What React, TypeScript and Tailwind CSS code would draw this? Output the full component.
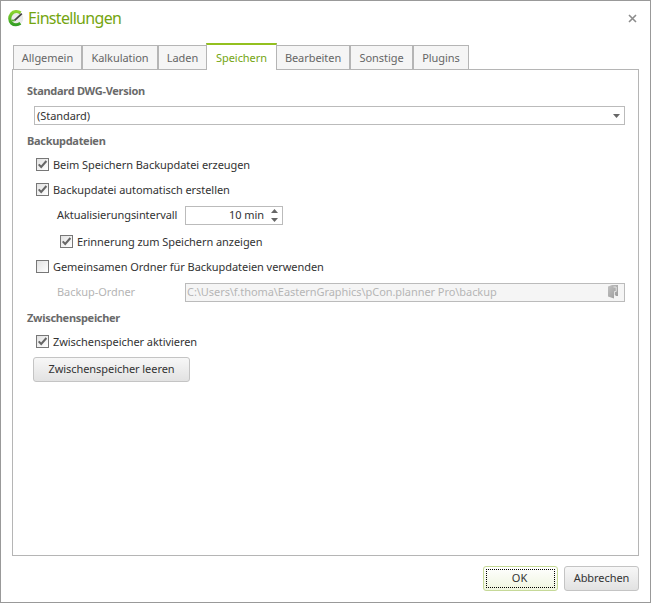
import type { ReactNode } from "react";

const tabs = [
  { label: "Allgemein", className: "w-[69px] border-x" },
  { label: "Kalkulation", className: "w-[76px] border-x" },
  { label: "Laden", className: "w-[48px] border-l" },
  { label: "Speichern", className: "w-[71px] border-x", active: true },
  { label: "Bearbeiten", className: "w-[73px] border-r" },
  { label: "Sonstige", className: "w-[63px] border-x" },
  { label: "Plugins", className: "w-[56px] border-x" },
];

function Logo() {
  return (
    <svg width="16" height="17" viewBox="0 0 16 17" fill="none">
      <defs>
        <linearGradient id="ring" x1="0" y1="0" x2="0" y2="1">
          <stop offset="0" stopColor="#8ad32f" />
          <stop offset="1" stopColor="#35a025" />
        </linearGradient>
      </defs>
      <circle cx="8.5" cy="8.5" r="6.8" fill="#ebebeb" />
      <path
        d="M12.6 2.9C9.6 .9 5.6 1.3 3.4 3.9 1.1 6.8 1.3 11 3.7 13.2 6.1 15.4 9.8 15.1 12.4 13.3"
        stroke="url(#ring)"
        strokeWidth="3.2"
      />
      <path d="M4 10.2 6.6 10.6" stroke="#55b52c" strokeWidth="1.6" />
      <path d="M6.6 10.4 13.8 3.6" stroke="#444" strokeWidth="1.8" />
    </svg>
  );
}

function Heading({ children }: { children: ReactNode }) {
  return (
    <h2 className="h-4 text-[11px] leading-4 font-bold tracking-[-0.3px] text-[#6a6a6a]">
      {children}
    </h2>
  );
}

function Checkbox({
  label,
  checked = false,
}: {
  label: string;
  checked?: boolean;
}) {
  return (
    <div className="flex h-4 items-start gap-1">
      <span className="mt-px flex size-[13px] shrink-0 items-center justify-center border border-[#777] bg-linear-to-br from-[#e2e2e2] to-white">
        {checked && (
          <svg width="11" height="11" viewBox="0 0 11 11" fill="none">
            <path d="M1.7 5.4 4.2 8 9.4 2" stroke="#666" strokeWidth="2" />
          </svg>
        )}
      </span>
      <span>{label}</span>
    </div>
  );
}

export default function App() {
  return (
    <div className="flex h-[603px] w-[651px] flex-col border border-[#999] bg-white font-['Noto_Sans','Open_Sans',sans-serif] text-[11px] leading-4 tracking-[-0.06px] whitespace-nowrap text-[#333]">
      {/* Titelleiste */}
      <header className="flex h-[42px] shrink-0 items-start justify-between pt-[9px] pr-[13px] pl-[7px]">
        <div className="flex items-start">
          <Logo />
          <h1 className="-mt-px ml-1 h-[18px] text-[16px] leading-[18px] tracking-[-0.69px] text-[#74a510]">
            Einstellungen
          </h1>
        </div>
        <svg width="9" height="9" viewBox="0 0 9 9" className="mt-1">
          <path d="M1 1 8 8M8 1 1 8" stroke="#8c8c8c" strokeWidth="1.6" />
        </svg>
      </header>

      {/* Reiter */}
      <nav className="relative z-10 -mb-px ml-3 flex h-[27px] shrink-0 items-end">
        {tabs.map((tab) => (
          <div
            key={tab.label}
            className={`${tab.className} flex items-center justify-center border-[#b5b5b5] ${
              tab.active
                ? "h-[27px] border-t-2 border-t-[#93c01f] bg-white text-[#74a510]"
                : "h-[25px] border-y bg-[#f5f5f5] text-[#666]"
            }`}
          >
            {tab.label}
          </div>
        ))}
      </nav>

      <main className="mx-[11px] h-[487px] shrink-0 border border-[#b5b5b5] pt-[13px] pr-[13px] pl-[14px]">
        <Heading>Standard DWG-Version</Heading>
        <div className="mt-[7px] ml-[7px] flex h-[19px] items-center justify-between border border-[#bbb] pr-1 pl-[2px]">
          <span>(Standard)</span>
          <svg width="7" height="4" viewBox="0 0 7 4">
            <path d="M0 0h7L3.5 4z" fill="#666" />
          </svg>
        </div>

        <div className="mt-2 tracking-tight">
          <Heading>Backupdateien</Heading>
        </div>
        <div className="mt-2 ml-[9px]">
          <Checkbox label="Beim Speichern Backupdatei erzeugen" checked />
        </div>
        <div className="mt-[9px] ml-[9px]">
          <Checkbox label="Backupdatei automatisch erstellen" checked />
        </div>
        <div className="mt-2 ml-[30px] flex h-[19px] items-start">
          <span className="mt-px w-[128px]">Aktualisierungsintervall</span>
          <div className="flex h-[19px] w-[98px] items-start justify-end gap-[7px] border border-[#bbb] pr-1">
            <span>10 min</span>
            <svg width="7" height="13" viewBox="0 0 7 13" className="mt-[2px]">
              <path d="M0 4h7L3.5 0zM0 9h7L3.5 13z" fill="#666" />
            </svg>
          </div>
        </div>
        <div className="mt-[9px] ml-[33px]">
          <Checkbox label="Erinnerung zum Speichern anzeigen" checked />
        </div>
        <div className="mt-[9px] ml-[9px]">
          <Checkbox label="Gemeinsamen Ordner für Backupdateien verwenden" />
        </div>
        <div className="mt-2 ml-[30px] flex h-[19px] items-start text-[#b5b5b5]">
          <span className="mt-px w-[128px]">Backup-Ordner</span>
          <div className="flex h-[19px] flex-1 items-start justify-between border border-[#bbb] bg-[#f5f5f5] pr-[6px] pl-px">
            <span>C:\Users\f.thoma\EasternGraphics\pCon.planner Pro\backup</span>
            {/* Ordnersymbol */}
            <svg width="10" height="14" viewBox="0 0 10 14" className="mt-px">
              <defs>
                <linearGradient id="folder" x1="0" y1="0" x2="1" y2="1">
                  <stop offset="0" stopColor="#c2c2c2" />
                  <stop offset="1" stopColor="#999" />
                </linearGradient>
              </defs>
              <path d="M0 1.5 4 0h6v11H7.5v-1H6v3.5L0 11.5z" fill="url(#folder)" />
              <path d="M6.5 12V6.5h1.7V2H5.5" fill="none" stroke="#f0f0f0" strokeWidth=".8" />
            </svg>
          </div>
        </div>

        <div className="mt-2">
          <Heading>Zwischenspeicher</Heading>
        </div>
        <div className="mt-2 ml-[9px]">
          <Checkbox label="Zwischenspeicher aktivieren" checked />
        </div>
        <button className="mt-[7px] ml-[6px] block h-[25px] w-[157px] rounded-[3px] border border-[#c4c4c4] bg-linear-to-b from-[#f7f7f7] to-[#e2e2e2] pb-[2px]">
          Zwischenspeicher leeren
        </button>
      </main>

      {/* Dialogschaltflächen */}
      <footer className="mt-[10px] mr-[11px] flex justify-end gap-[6px]">
        <button className="h-[25px] w-[75px] rounded-[3px] border border-[#c6d998] bg-linear-to-b from-white to-[#eff5df] p-[2px]">
          <span className="flex h-full items-center justify-center border border-dotted border-black pr-[2px] pb-[2px]">
            OK
          </span>
        </button>
        <button className="h-[25px] w-[75px] rounded-[3px] border border-[#c4c4c4] bg-linear-to-b from-[#f7f7f7] to-[#e2e2e2] pb-[2px]">
          Abbrechen
        </button>
      </footer>
    </div>
  );
}
